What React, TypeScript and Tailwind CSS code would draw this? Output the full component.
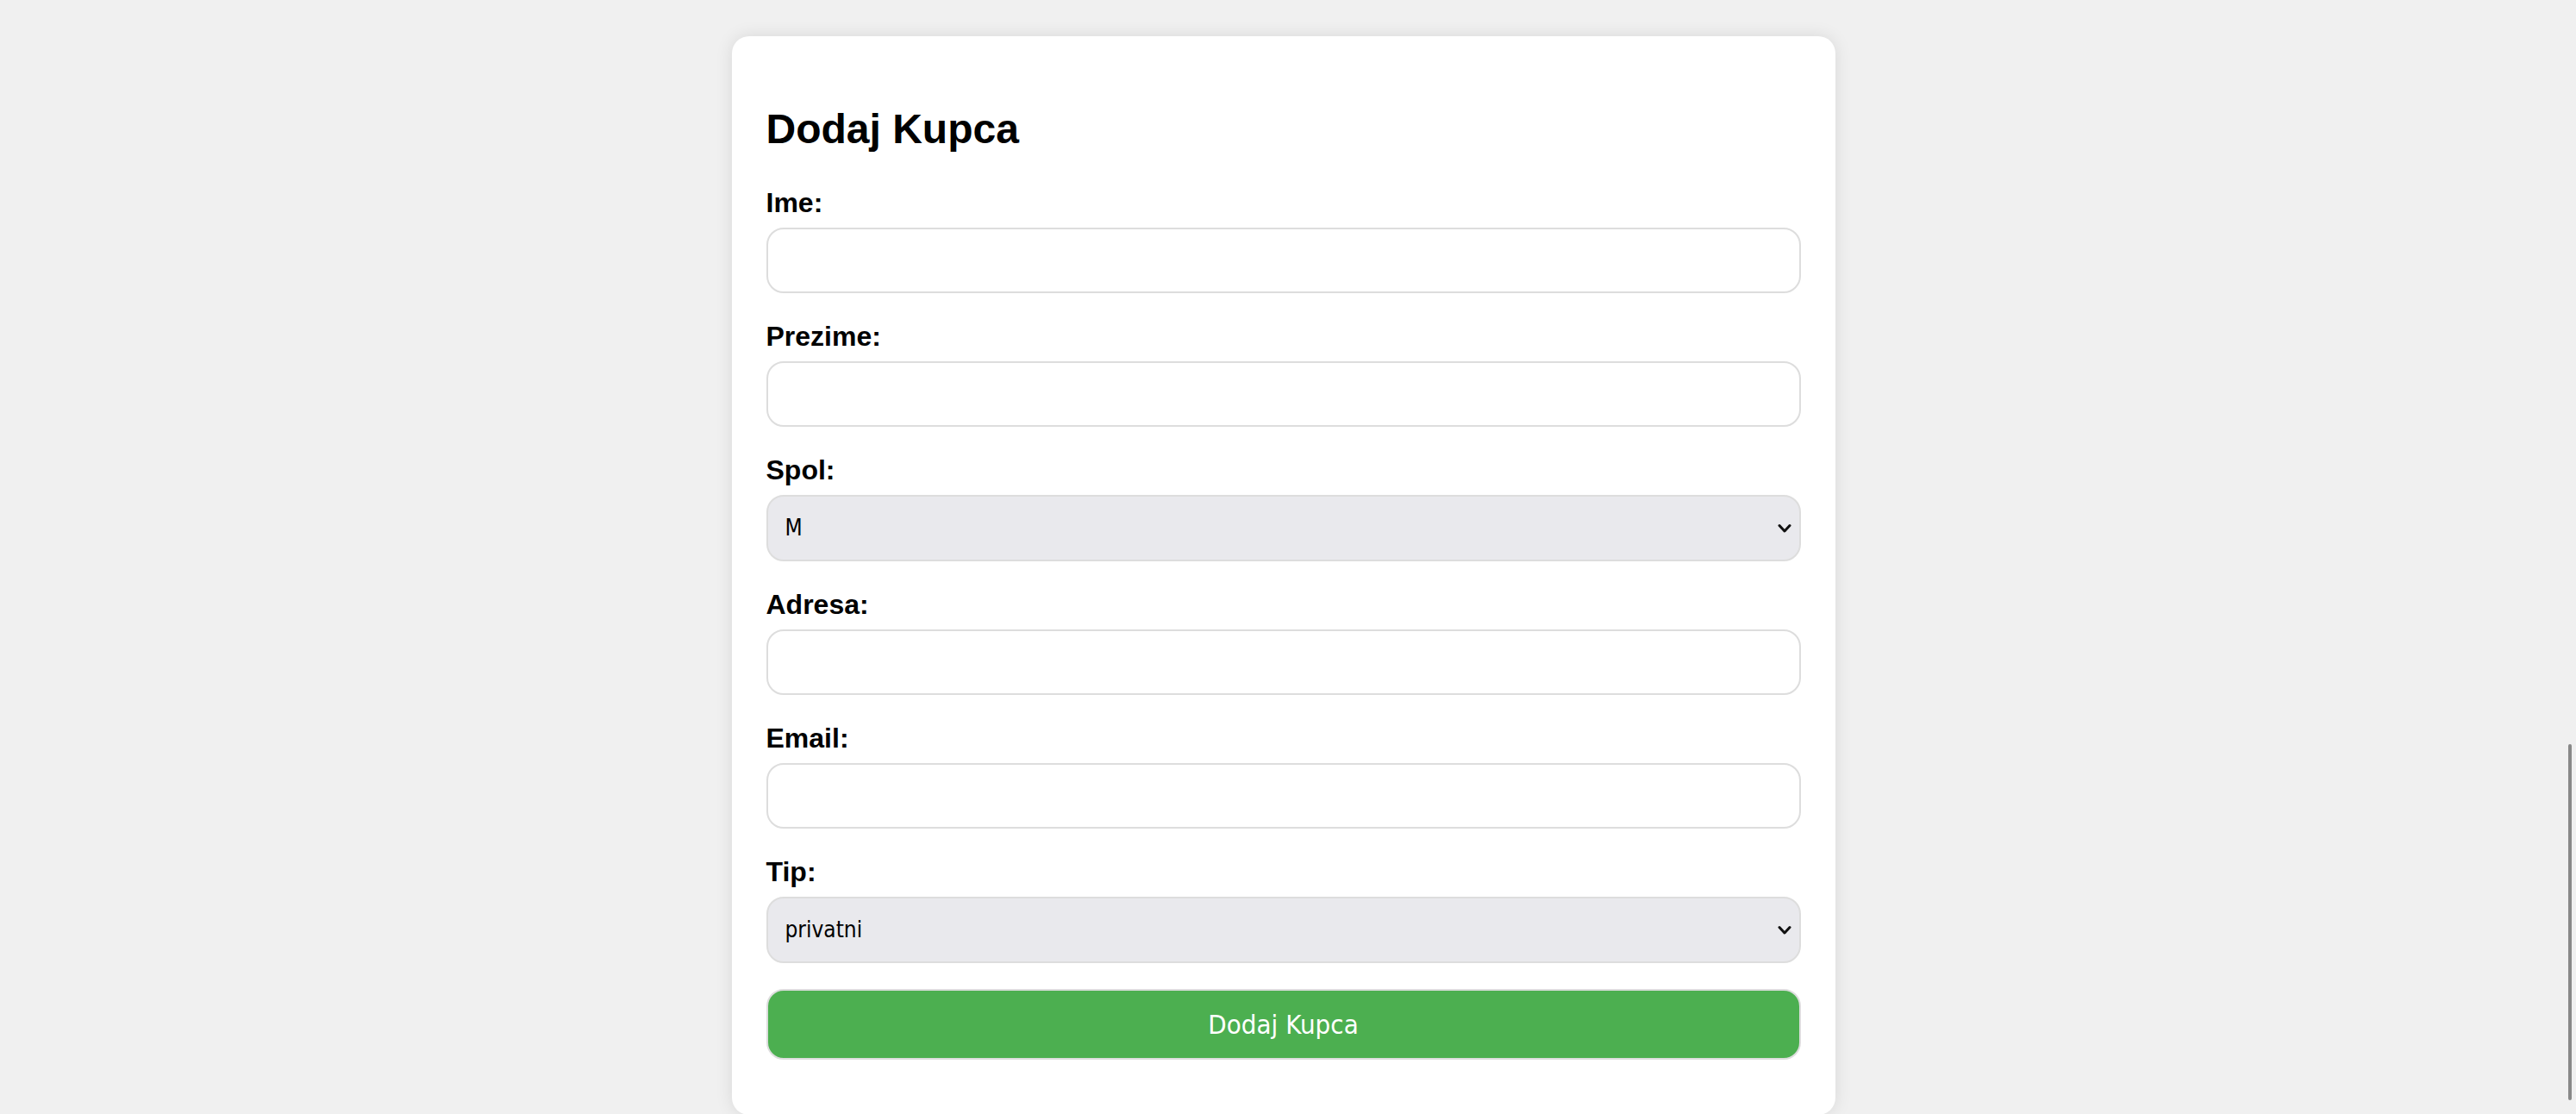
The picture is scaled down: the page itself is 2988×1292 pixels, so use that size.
import { useState } from 'react';

const labelCls = "block text-[32px] leading-[37px] font-bold text-black mb-[10px]";
const inputCls =
  "block w-full h-[76px] px-[20px] bg-white border-2 border-[#dddddd] rounded-[20px] text-[26px] outline-none mb-[32px]";

function Chevron() {
  return (
    <svg
      className="pointer-events-none absolute right-[11px] top-1/2 -translate-y-1/2"
      width="16"
      height="11"
      viewBox="0 0 16 11"
      fill="none"
    >
      <polyline points="2,2 8,8.5 14,2" stroke="#111" strokeWidth="3" strokeLinecap="round" strokeLinejoin="round" />
    </svg>
  );
}

function SelectField({
  value,
  onChange,
  options,
  className,
}: {
  value: string;
  onChange: (v: string) => void;
  options: string[];
  className: string;
}) {
  return (
    <div className={"relative " + className}>
      <select
        value={value}
        onChange={(e) => onChange(e.target.value)}
        className="block w-full h-[77px] appearance-none pl-[20px] pr-[40px] bg-[#e9e9ed] border-2 border-[#dddddd] rounded-[20px] text-[26px] text-black font-['DejaVu_Sans_Condensed','Noto_Sans',sans-serif] outline-none"
      >
        {options.map((o) => (
          <option key={o} value={o}>
            {o}
          </option>
        ))}
      </select>
      <Chevron />
    </div>
  );
}

export default function App() {
  const [spol, setSpol] = useState('M');
  const [tip, setTip] = useState('privatni');

  return (
    <div className="min-h-screen h-screen overflow-hidden bg-[#f0f0f0] pr-[11px] font-['Liberation_Sans',Arial,sans-serif]">
      <div className="mx-auto mt-[42px] w-[1280px] bg-white rounded-[20px] shadow-[0_0_20px_rgba(0,0,0,0.1)] px-[40px] pt-[40px] pb-[64px]">
        <h2 className="mt-[40px] mb-[40px] text-[48px] leading-[55px] font-bold text-black">Dodaj Kupca</h2>
        <form onSubmit={(e) => e.preventDefault()}>
          <label className={labelCls}>Ime:</label>
          <input type="text" className={inputCls} />

          <label className={labelCls}>Prezime:</label>
          <input type="text" className={inputCls} />

          <label className={labelCls}>Spol:</label>
          <SelectField value={spol} onChange={setSpol} options={['M', 'Ž']} className="mb-[32px]" />

          <label className={labelCls}>Adresa:</label>
          <input type="text" className={inputCls} />

          <label className={labelCls}>Email:</label>
          <input type="email" className={inputCls} />

          <label className={labelCls}>Tip:</label>
          <SelectField value={tip} onChange={setTip} options={['privatni', 'poslovni']} className="mb-[30px]" />

          <button
            type="submit"
            className="block w-full h-[82px] bg-[#4caf50] border-2 border-[#dddddd] rounded-[20px] text-white text-[31px] font-['DejaVu_Sans_Condensed','Noto_Sans',sans-serif]"
          >
            Dodaj Kupca
          </button>
        </form>
      </div>
      <div className="fixed right-[5px] top-[863px] w-[4px] h-[413px] rounded-[2px] bg-[#888888]" />
    </div>
  );
}
